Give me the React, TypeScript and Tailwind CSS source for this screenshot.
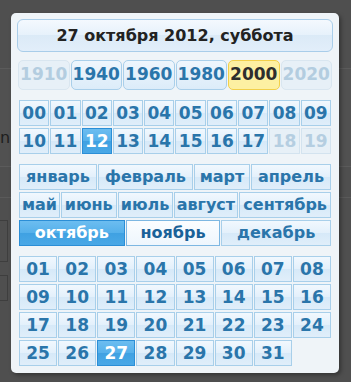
import React from 'react'

const YEARS = [
  { y: '1910', state: 'off' },
  { y: '1940', state: '' },
  { y: '1960', state: '' },
  { y: '1980', state: '' },
  { y: '2000', state: 'cur' },
  { y: '2020', state: 'off' },
]

const HOURS = Array.from({ length: 20 }, (_, i) => String(i).padStart(2, '0'))

const MONTH_ROWS = [
  { cols: 'grid-cols-[78fr_95fr_56fr_80fr]', items: ['январь', 'февраль', 'март', 'апрель'] },
  { cols: 'grid-cols-[41fr_56fr_55fr_65fr_92fr]', items: ['май', 'июнь', 'июль', 'август', 'сентябрь'] },
  { cols: 'grid-cols-[106fr_95fr_110fr]', items: ['октябрь', 'ноябрь', 'декабрь'] },
]

const DAYS = Array.from({ length: 31 }, (_, i) => String(i + 1).padStart(2, '0'))

const base = 'flex h-[26px] items-center justify-center border font-bold leading-none'
const normal =
  'border-[#a8cfea] bg-[linear-gradient(#f1f8fe,#e3f0fb_50%,#d6e9f8_50%,#e0eefa)] text-[#2a75aa]'
const selected =
  'border-[#2b8ed6] bg-[linear-gradient(#6cbdf0,#55b0ea_50%,#3fa1e2_50%,#4aa8e6)] text-white'
const disabled = 'border-[#d3e3ef] bg-[#e7f0f7] text-[#b5cee1]'

function cell(state: string, size = 'text-[17px]') {
  if (state === 'sel') return `${base} ${size} ${selected}`
  if (state === 'off') return `${base} ${size} ${disabled}`
  return `${base} ${size} ${normal}`
}

export default function App() {
  return (
    <div className="relative h-[382px] w-[351px] overflow-hidden bg-[#4f4f4f] font-['DejaVu_Sans',sans-serif]">
      {/* dimmed page underneath */}
      <div className="absolute left-0 top-[68px] h-[99px] w-[351px] border-y border-[#5b5b5b] bg-[#515151]" />
      <div className="absolute left-0 top-[130px] text-[16px] leading-none text-[#1e1e1e]">n</div>
      <div className="absolute left-0 top-[197px] h-px w-[351px] bg-[#5a5a5a]" />
      <div className="absolute left-[-4px] top-[220px] h-[42px] w-[12px] border border-[#3e3e3e]" />
      <div className="absolute left-[-4px] top-[275px] h-[26px] w-[12px] border border-[#3e3e3e]" />

      <div className="relative ml-[11px] mt-[13px] w-[328px] rounded-[5px] bg-[#eff4f8] px-[6px] pb-[7px] pt-[6px] shadow-[2px_2px_4px_rgba(0,0,0,0.35)]">
        <div className="flex h-[33px] items-center justify-center rounded-[6px] border border-[#a9cde9] bg-[linear-gradient(#f4f9fe,#e6f1fb_50%,#dbeaf7_50%,#e2eefa)] text-[16px] font-bold text-[#222]">
          27 октября 2012, суббота
        </div>

        <div className="mx-px mt-[8px] grid grid-cols-6 gap-x-px">
          {YEARS.map((y) => (
            <div
              key={y.y}
              className={
                y.state === 'cur'
                  ? 'flex h-[30px] items-center justify-center rounded-[5px] border border-[#f2d04a] bg-[#fdf0a2] text-[17px] font-bold text-[#2e2e2e]'
                  : y.state === 'off'
                    ? 'flex h-[30px] items-center justify-center rounded-[5px] border border-[#d9e6f0] bg-[#e7f0f7] text-[17px] font-bold text-[#b3cde0]'
                    : 'flex h-[30px] items-center justify-center rounded-[5px] border border-[#a9cfea] bg-[linear-gradient(#eef6fd,#dcecf9)] text-[17px] font-bold text-[#2a75aa]'
              }
            >
              {y.y}
            </div>
          ))}
        </div>

        <div className="mx-[2px] mt-[10px] grid grid-cols-10 gap-x-px gap-y-[2px]">
          {HOURS.map((h) => (
            <div key={h} className={cell(h === '12' ? 'sel' : h === '18' || h === '19' ? 'off' : '')}>
              {h}
            </div>
          ))}
        </div>

        <div className="mx-[2px] mt-[10px] flex flex-col gap-[2px]">
          {MONTH_ROWS.map((row, ri) => (
            <div key={ri} className={`grid gap-x-px ${row.cols}`}>
              {row.items.map((m) =>
                m === 'ноябрь' ? (
                  <div
                    key={m}
                    className={`${base} text-[16px] border-[#7db7e2] bg-[linear-gradient(#fbfdff,#eef6fd)] text-[#1a6198]`}
                  >
                    {m}
                  </div>
                ) : (
                  <div key={m} className={cell(m === 'октябрь' ? 'sel' : '', 'text-[16px]')}>
                    {m}
                  </div>
                ),
              )}
            </div>
          ))}
        </div>

        <div className="mx-[2px] mt-[10px] grid grid-cols-8 gap-x-px gap-y-[2px]">
          {DAYS.map((d) => (
            <div key={d} className={cell(d === '27' ? 'sel' : '')}>
              {d}
            </div>
          ))}
        </div>
      </div>
    </div>
  )
}
